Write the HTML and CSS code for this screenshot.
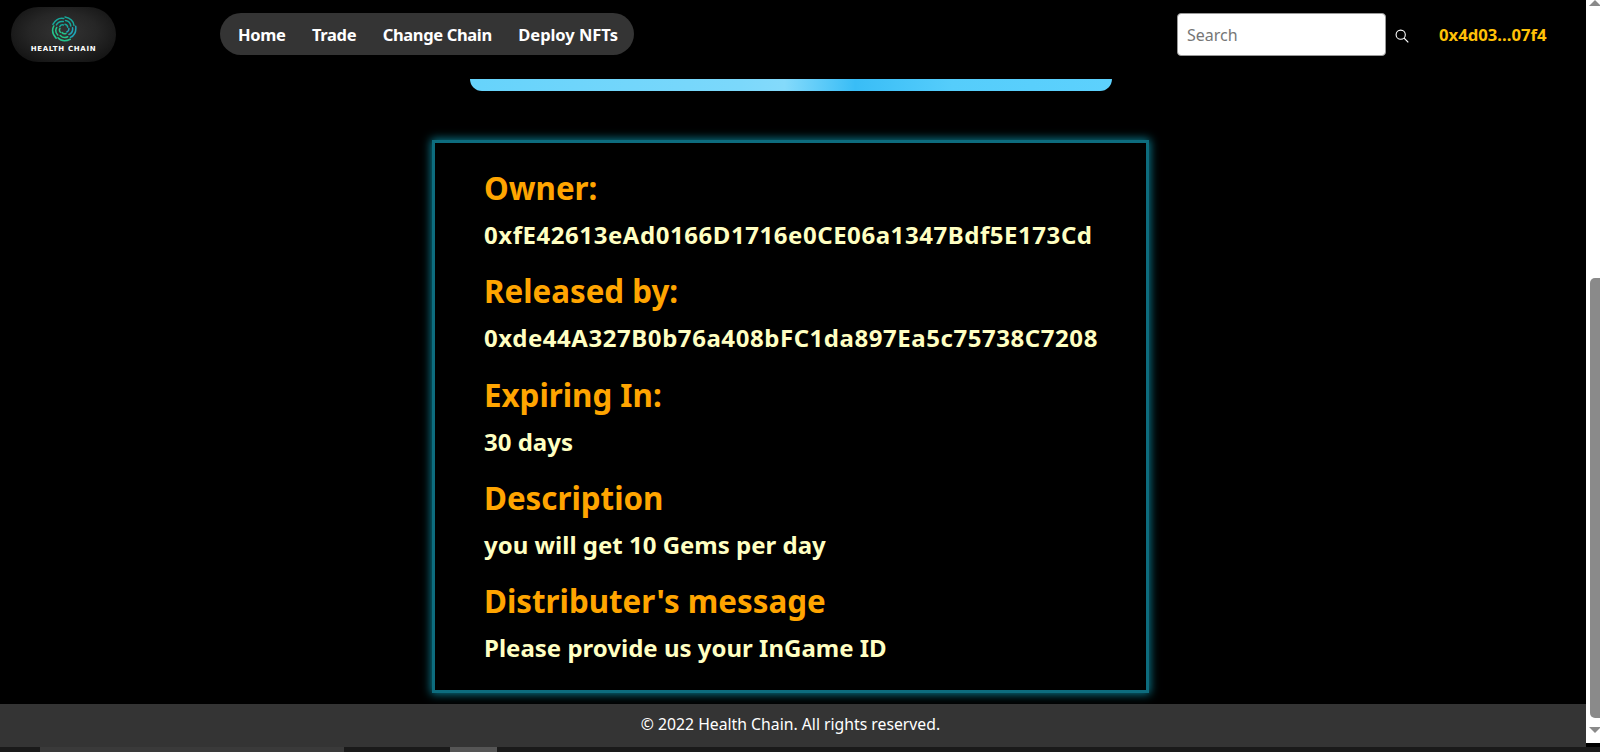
FILE: index.html
```html
<!DOCTYPE html>
<html lang="en">
<head>
<meta charset="utf-8">
<title>Health Chain</title>
<link rel="stylesheet" href="styles.css">
</head>
<body>
<div class="app">
  <div class="window">
    <div class="page">
      <header class="navbar">
        <a class="logo">
          <svg class="logo-mark" viewBox="-13 -13 26 26" width="26" height="26" fill="none" stroke-linecap="round" stroke-width="1.500">
            <defs>
              <path id="blade" d="M1-12C6-11 9.500-8 10-3.500M1.500-8.500C4.500-8 6.500-6 6.800-3M1-4.800C2.500-4.500 3.500-3.500 3.700-1.800"/>
            </defs>
            <use href="#blade" stroke="#17a89b"/>
            <use href="#blade" stroke="#1fa6b8" transform="rotate(72)"/>
            <use href="#blade" stroke="#24c48c" transform="rotate(144)"/>
            <use href="#blade" stroke="#24c48c" transform="rotate(216)"/>
            <use href="#blade" stroke="#17a89b" transform="rotate(288)"/>
          </svg>
          <span class="logo-text">HEALTH CHAIN</span>
        </a>
        <nav class="nav-pill">
          <a class="nav-link">Home</a>
          <a class="nav-link">Trade</a>
          <a class="nav-link">Change Chain</a>
          <a class="nav-link nav-link-wide">Deploy NFTs</a>
        </nav>
        <form class="search">
          <input class="search-input" type="text" placeholder="Search">
          <svg class="search-icon" viewBox="0 0 14 14" width="14" height="14" fill="none" stroke="#fff" stroke-width="1.1">
            <circle cx="5.700" cy="5.700" r="4.600"/>
            <path d="M9 9l4.300 4.300"/>
          </svg>
        </form>
        <span class="address">0x4d03...07f4</span>
      </header>
      <main class="content">
        <div class="image-edge"></div>
        <section class="details">
          <h2 class="label">Owner:</h2>
          <p class="value value-hash">0xfE42613eAd0166D1716e0CE06a1347Bdf5E173Cd</p>
          <h2 class="label">Released by:</h2>
          <p class="value value-hash">0xde44A327B0b76a408bFC1da897Ea5c75738C7208</p>
          <h2 class="label">Expiring In:</h2>
          <p class="value">30 days</p>
          <h2 class="label">Description</h2>
          <p class="value">you will get 10 Gems per day</p>
          <h2 class="label">Distributer's message</h2>
          <p class="value">Please provide us your InGame ID</p>
        </section>
      </main>
      <footer class="footer">© 2022 Health Chain. All rights reserved.</footer>
    </div>
    <div class="scrollbar">
      <span class="arrow-up"></span>
      <span class="thumb"></span>
      <span class="arrow-down"></span>
    </div>
  </div>
  <div class="taskbar">
    <span class="task task-wide"></span>
    <span class="task task-small"></span>
  </div>
</div>
</body>
</html>
```
FILE: styles.css
```css
* { box-sizing: border-box; }

html, body {
  margin: 0;
  height: 100%;
  background: #000;
  overflow: hidden;
}

body {
  font-family: "Noto Sans", "Open Sans", sans-serif;
  color: #fff;
}

.app {
  height: 752px;
  display: flex;
  flex-direction: column;
}

.window {
  height: 747px;
  display: flex;
  align-items: flex-start;
}

.page {
  flex: 1;
  min-width: 0;
  height: 747px;
  display: flex;
  flex-direction: column;
}

/* Navbar */
.navbar {
  height: 79px;
  flex: none;
  display: flex;
  align-items: flex-start;
  padding: 7px 0 0 11px;
}

.logo {
  width: 105px;
  height: 55px;
  flex: none;
  border-radius: 28px;
  background: radial-gradient(ellipse at 50% 45%, #333 0%, #262626 45%, #0b0b0b 100%);
  display: flex;
  flex-direction: column;
  align-items: center;
  padding-top: 9px;
}

.logo-mark { display: block; }

.logo-text {
  font-family: "DejaVu Sans", sans-serif;
  font-weight: 700;
  font-size: 7px;
  line-height: 10px;
  letter-spacing: 0.7px;
  margin-top: 2px;
  white-space: nowrap;
}

.nav-pill {
  margin: 6px 0 0 104px;
  width: 414px;
  height: 42px;
  flex: none;
  border-radius: 21px;
  background: #343434;
  display: flex;
  align-items: center;
  gap: 26.500px;
  padding-left: 18px;
}

.nav-link {
  font-size: 16.500px;
  font-weight: 700;
  letter-spacing: -0.35px;
  color: #fff;
  white-space: nowrap;
}

.nav-link-wide { letter-spacing: -0.05px; }

.search {
  margin: 6px 0 0 543px;
  display: flex;
  align-items: center;
  flex: none;
}

.search-input {
  width: 209px;
  height: 43px;
  border: 1px solid #999;
  border-radius: 4px;
  background: #fff;
  padding: 0 9px;
  font: 400 16px "Noto Sans", sans-serif;
  outline: none;
}

.search-input::placeholder { color: #767676; opacity: 1; }

.search-icon {
  margin: 2px 0 0 9px;
  flex: none;
}

.address {
  margin: 16px 0 0 30px;
  font-size: 16.700px;
  line-height: 24px;
  font-weight: 700;
  color: #ffc107;
  white-space: nowrap;
}

/* Main */
.content {
  flex: 1;
  min-height: 0;
  display: flex;
  flex-direction: column;
  align-items: center;
  padding-right: 5px;
}

.image-edge {
  width: 642px;
  height: 12px;
  flex: none;
  border-radius: 0 0 14px 14px;
  background: linear-gradient(90deg, #66d3fb 0%, #7bd8fb 42%, #84dafb 49%, #39bdf6 60%, #55cdfb 75%, #5dd1fd 100%);
}

.details {
  margin-top: 49px;
  width: 717px;
  height: 553px;
  flex: none;
  border: 3px solid #0d6c7e;
  box-shadow: 0 0 9px 1px #0a7d92;
  background: #000;
  padding: 22px 0 0 49px;
}

.label {
  margin: 0;
  font-size: 31.300px;
  line-height: 47px;
  font-weight: 700;
  color: #ffa500;
  white-space: nowrap;
}

.value {
  margin: 0 0 11.250px;
  font-size: 24px;
  line-height: 45px;
  font-weight: 700;
  color: #ffffc2;
  white-space: nowrap;
}

.value-hash { letter-spacing: 0.55px; }

/* Footer */
.footer {
  height: 43px;
  flex: none;
  background: #343434;
  display: flex;
  align-items: center;
  justify-content: center;
  padding: 0 5px 3px 0;
  font-size: 15.750px;
  color: #fff;
}

/* Scrollbar */
.scrollbar {
  width: 14px;
  height: 743px;
  flex: none;
  background: #fff;
  display: flex;
  flex-direction: column;
  overflow: hidden;
}

.arrow-up {
  flex: none;
  width: 0;
  height: 0;
  margin-left: 3px;
  border-left: 6px solid transparent;
  border-right: 6px solid transparent;
  border-bottom: 6px solid #8a8a8a;
}

.thumb {
  flex: none;
  width: 10px;
  height: 440px;
  margin: 272px 0 0 4px;
  background: #8a8a8a;
  border-radius: 5px 0 0 5px;
}

.arrow-down {
  flex: none;
  width: 0;
  height: 0;
  margin: 9px 0 0 3px;
  border-left: 6px solid transparent;
  border-right: 6px solid transparent;
  border-top: 6px solid #8a8a8a;
}

/* Bottom strip */
.taskbar {
  height: 5px;
  flex: none;
  background: #1a1a1a;
  display: flex;
  padding-left: 40px;
}

.task { height: 5px; background: #3a3a3a; }
.task-wide { width: 304px; }
.task-small { width: 47px; margin-left: 106px; background: #555; }
```
